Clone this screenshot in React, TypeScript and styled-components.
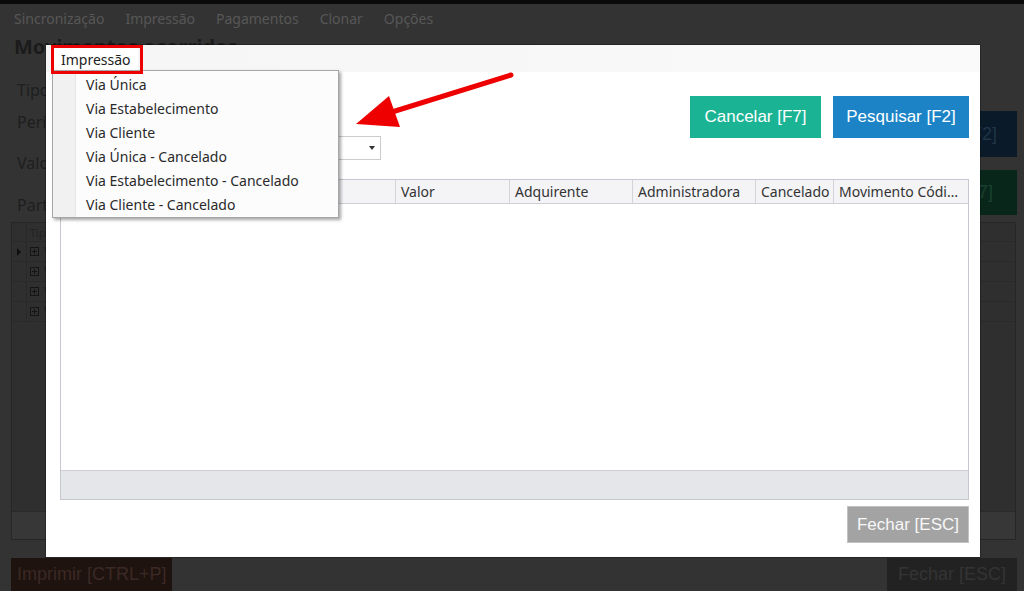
import React from "react";
import styled, { createGlobalStyle } from "styled-components";

const GlobalStyle = createGlobalStyle`
  html, body {
    margin: 0;
    padding: 0;
    background: #333333;
  }
  body {
    font-family: "Noto Sans", "DejaVu Sans", sans-serif;
    overflow: hidden;
  }
  * {
    box-sizing: border-box;
  }
`;

const menuItems = ["Sincronização", "Impressão", "Pagamentos", "Clonar", "Opções"];

const printOptions = [
  "Via Única",
  "Via Estabelecimento",
  "Via Cliente",
  "Via Única - Cancelado",
  "Via Estabelecimento - Cancelado",
  "Via Cliente - Cancelado",
];

const columns = [
  { title: "Tipo", width: 110 },
  { title: "Descrição", width: 225 },
  { title: "Valor", width: 114 },
  { title: "Adquirente", width: 123 },
  { title: "Administradora", width: 123 },
  { title: "Cancelado", width: 78 },
  { title: "Movimento Código Externo", width: 0 },
];

const bgRows = ["Venda crédito", "Venda débito", "Voucher", "Venda parcelada"];

const App: React.FC = () => {
  return (
    <Page>
      <GlobalStyle />
      <TopStrip />
      <MenuBar>
        {menuItems.map((item) => (
          <MenuItem key={item}>{item}</MenuItem>
        ))}
      </MenuBar>
      <Title>Movimentos ocorridos</Title>

      <FormArea>
        <LabelColumn>
          <FieldLabel $top={17}>Tipo</FieldLabel>
          <FieldLabel $top={10}>Período</FieldLabel>
          <FieldLabel $top={19}>Valor</FieldLabel>
          <FieldLabel $top={20}>Parte</FieldLabel>
        </LabelColumn>
        <BgButtonColumn>
          <BgButton $bg="#0a1a28" $fg="#1f354a" $h={46}>
            Pesquisar [F2]
          </BgButton>
          <BgButton $bg="#08271a" $fg="#1a4030" $h={45}>
            Cancelar [F7]
          </BgButton>
        </BgButtonColumn>
      </FormArea>

      <BgGrid>
        <BgGridHeader>
          <BgIndicator />
          <BgHeaderText>Tipo</BgHeaderText>
        </BgGridHeader>
        {bgRows.map((row, index) => (
          <BgGridRow key={index}>
            <BgIndicator>{index === 0 && <RowArrow />}</BgIndicator>
            <ExpandBox />
            <BgRowText>{row}</BgRowText>
          </BgGridRow>
        ))}
        <BgGridFill />
        <BgGridFooter />
      </BgGrid>

      <BottomBar>
        <PrintButton>Imprimir [CTRL+P]</PrintButton>
        <BgCloseButton>Fechar [ESC]</BgCloseButton>
      </BottomBar>

      <Modal>
        <ModalHeader>
          <HeaderMenuItem>Impressão</HeaderMenuItem>
        </ModalHeader>
        <ModalBody>
          <Toolbar>
            <FilterField>
              <FilterLabel>Modelo de impressão</FilterLabel>
              <Select>
                <Caret />
              </Select>
            </FilterField>
            <ActionGroup>
              <ActionButton $bg="#1ab394" $w={131}>
                Cancelar [F7]
              </ActionButton>
              <ActionButton $bg="#1c84c6" $w={136}>
                Pesquisar [F2]
              </ActionButton>
            </ActionGroup>
          </Toolbar>

          <DataGrid>
            <GridHeader>
              {columns.map((col) => (
                <HeaderCell key={col.title} $w={col.width}>
                  {col.title}
                </HeaderCell>
              ))}
            </GridHeader>
            <GridBody />
            <GridFooter />
          </DataGrid>

          <ModalFooter>
            <CloseButton>Fechar [ESC]</CloseButton>
          </ModalFooter>
        </ModalBody>

        <Dropdown>
          {printOptions.map((opt) => (
            <DropdownItem key={opt}>{opt}</DropdownItem>
          ))}
        </Dropdown>
      </Modal>

      <Highlight />

      <ArrowSvg width="1024" height="591" viewBox="0 0 1024 591">
        <line x1="511" y1="75" x2="392" y2="112" stroke="#ee0000" strokeWidth="5" strokeLinecap="round" />
        <polygon points="356,124 389,96 400,127" fill="#ee0000" />
      </ArrowSvg>
    </Page>
  );
};

export default App;

const Page = styled.div`
  position: relative;
  width: 1024px;
  height: 591px;
  display: flex;
  flex-direction: column;
  background: #333333;
  overflow: hidden;
`;

const TopStrip = styled.div`
  height: 4px;
  background: #0a0a0a;
`;

const MenuBar = styled.div`
  height: 28px;
  display: flex;
  align-items: center;
  gap: 21px;
  padding-left: 14px;
`;

const MenuItem = styled.span`
  font-size: 14px;
  color: #575757;
`;

const Title = styled.h1`
  margin: 0;
  height: 30px;
  line-height: 30px;
  padding-left: 14px;
  font-size: 20px;
  font-weight: 700;
  color: #1b1b1b;
`;

const FormArea = styled.div`
  height: 160px;
  display: flex;
  justify-content: space-between;
  padding: 0 7px 0 17px;
`;

const LabelColumn = styled.div`
  display: flex;
  flex-direction: column;
`;

const FieldLabel = styled.span<{ $top: number }>`
  margin-top: ${(p) => p.$top}px;
  font-size: 16px;
  line-height: 22px;
  color: #1e1e1e;
`;

const BgButtonColumn = styled.div`
  display: flex;
  flex-direction: column;
  gap: 13px;
  padding-top: 49px;
`;

const BgButton = styled.div<{ $bg: string; $fg: string; $h: number }>`
  width: 156px;
  height: ${(p) => p.$h}px;
  display: flex;
  align-items: center;
  justify-content: center;
  background: ${(p) => p.$bg};
  color: ${(p) => p.$fg};
  font-family: "Liberation Sans", Arial, sans-serif;
  font-size: 18px;
`;

const BgGrid = styled.div`
  height: 318px;
  margin: 0 8px 0 11px;
  display: flex;
  flex-direction: column;
  background: #2f2f2f;
  border: 1px solid #262626;
`;

const BgGridHeader = styled.div`
  height: 19px;
  display: flex;
  align-items: center;
  border-bottom: 1px solid #292929;
`;

const BgIndicator = styled.div`
  width: 15px;
  height: 100%;
  display: flex;
  align-items: center;
  justify-content: center;
  border-right: 1px solid #292929;
`;

const BgHeaderText = styled.span`
  margin-left: 3px;
  font-size: 11px;
  color: #222222;
`;

const BgGridRow = styled.div`
  height: 20px;
  display: flex;
  align-items: center;
  border-bottom: 1px solid #292929;
`;

const RowArrow = styled.span`
  width: 0;
  height: 0;
  border-top: 4px solid transparent;
  border-bottom: 4px solid transparent;
  border-left: 4px solid #0f0f0f;
`;

const ExpandBox = styled.span`
  position: relative;
  width: 9px;
  height: 9px;
  margin-left: 3px;
  border: 1px solid #151515;

  &::before,
  &::after {
    content: "";
    position: absolute;
    background: #151515;
  }
  &::before {
    left: 1px;
    right: 1px;
    top: 3px;
    height: 1px;
  }
  &::after {
    top: 1px;
    bottom: 1px;
    left: 3px;
    width: 1px;
  }
`;

const BgRowText = styled.span`
  margin-left: 5px;
  font-size: 12px;
  color: #1e1e1e;
`;

const BgGridFill = styled.div`
  flex: 1;
`;

const BgGridFooter = styled.div`
  height: 28px;
  background: #373737;
  border-top: 1px solid #2a2a2a;
`;

const BottomBar = styled.div`
  height: 33px;
  margin-top: 18px;
  display: flex;
  justify-content: space-between;
  padding: 0 7px 0 11px;
`;

const PrintButton = styled.div`
  width: 161px;
  display: flex;
  align-items: center;
  padding-left: 6px;
  background: #1f130f;
  color: #3b2925;
  font-family: "Liberation Sans", Arial, sans-serif;
  font-size: 18px;
`;

const BgCloseButton = styled.div`
  width: 130px;
  display: flex;
  align-items: center;
  justify-content: center;
  background: #222222;
  color: #343434;
  font-family: "Liberation Sans", Arial, sans-serif;
  font-size: 18px;
`;

const Modal = styled.div`
  position: absolute;
  left: 46px;
  top: 45px;
  width: 934px;
  height: 512px;
  display: flex;
  flex-direction: column;
  background: #ffffff;
  box-shadow: 0 0 0 1px rgba(0, 0, 0, 0.25);
`;

const ModalHeader = styled.div`
  height: 27px;
  background: linear-gradient(to right, #f5f5f5, #fafafa);
`;

const HeaderMenuItem = styled.div`
  display: inline-block;
  margin: 3px 0 0 8px;
  height: 24px;
  line-height: 24px;
  padding: 0 7px;
  background: #ffffff;
  font-size: 14px;
  color: #222222;
`;

const ModalBody = styled.div`
  flex: 1;
  display: flex;
  flex-direction: column;
  padding: 24px 11px 14px 14px;
`;

const Toolbar = styled.div`
  height: 83px;
  display: flex;
  justify-content: space-between;
  align-items: flex-start;
`;

const FilterField = styled.div`
  display: flex;
  flex-direction: column;
  padding-top: 14px;
`;

const FilterLabel = styled.span`
  font-size: 14px;
  line-height: 20px;
  margin-bottom: 6px;
  color: #333333;
`;

const Select = styled.div`
  width: 321px;
  height: 24px;
  display: flex;
  align-items: center;
  justify-content: flex-end;
  padding-right: 5px;
  border: 1px solid #cbcbcb;
  background: #ffffff;
`;

const Caret = styled.span`
  width: 0;
  height: 0;
  border-left: 3px solid transparent;
  border-right: 3px solid transparent;
  border-top: 4px solid #333333;
`;

const ActionGroup = styled.div`
  display: flex;
  gap: 12px;
`;

const ActionButton = styled.button<{ $bg: string; $w: number }>`
  width: ${(p) => p.$w}px;
  height: 42px;
  padding: 0;
  border: none;
  background: ${(p) => p.$bg};
  color: #ffffff;
  font-family: "Liberation Sans", Arial, sans-serif;
  font-size: 17px;
`;

const DataGrid = styled.div`
  height: 321px;
  display: flex;
  flex-direction: column;
  border: 1px solid #c6c7cf;
`;

const GridHeader = styled.div`
  height: 24px;
  display: flex;
  background: #f4f4f6;
  border-bottom: 1px solid #cfd0d7;
`;

const HeaderCell = styled.div<{ $w: number }>`
  ${(p) => (p.$w ? `width: ${p.$w}px;` : "flex: 1; min-width: 0; text-overflow: ellipsis;")}
  padding: 0 0 0 5px;
  line-height: 23px;
  font-size: 14px;
  color: #333333;
  white-space: nowrap;
  overflow: hidden;
  border-right: 1px solid #d3d4da;

  &:last-child {
    border-right: none;
    padding-right: 4px;
  }
`;

const GridBody = styled.div`
  flex: 1;
  background: #ffffff;
`;

const GridFooter = styled.div`
  height: 29px;
  background: #e5e6ea;
  border-top: 1px solid #cfd0d7;
`;

const ModalFooter = styled.div`
  margin-top: 6px;
  display: flex;
  justify-content: flex-end;
`;

const CloseButton = styled.button`
  width: 122px;
  height: 37px;
  padding: 0;
  border: 1px solid #c2c2c2;
  background: #a3a3a3;
  color: #f7f7f7;
  font-family: "Liberation Sans", Arial, sans-serif;
  font-size: 17px;
`;

const Dropdown = styled.div`
  position: absolute;
  left: 6px;
  top: 25px;
  width: 287px;
  height: 148px;
  padding-top: 2px;
  border: 1px solid #a6a6a6;
  background: linear-gradient(
    to right,
    #f1f1f1 0,
    #f1f1f1 22px,
    #e6e6e6 22px,
    #e6e6e6 23px,
    #fcfcfc 23px
  );
  box-shadow: 2px 2px 3px rgba(0, 0, 0, 0.35);
`;

const DropdownItem = styled.div`
  height: 24px;
  line-height: 24px;
  padding-left: 33px;
  font-size: 14px;
  color: #2a2a2a;
  white-space: nowrap;
`;

const Highlight = styled.div`
  position: absolute;
  left: 51px;
  top: 45px;
  width: 92px;
  height: 29px;
  border: 3.5px solid #ec0000;
  pointer-events: none;
`;

const ArrowSvg = styled.svg`
  position: absolute;
  left: 0;
  top: 0;
  pointer-events: none;
`;
